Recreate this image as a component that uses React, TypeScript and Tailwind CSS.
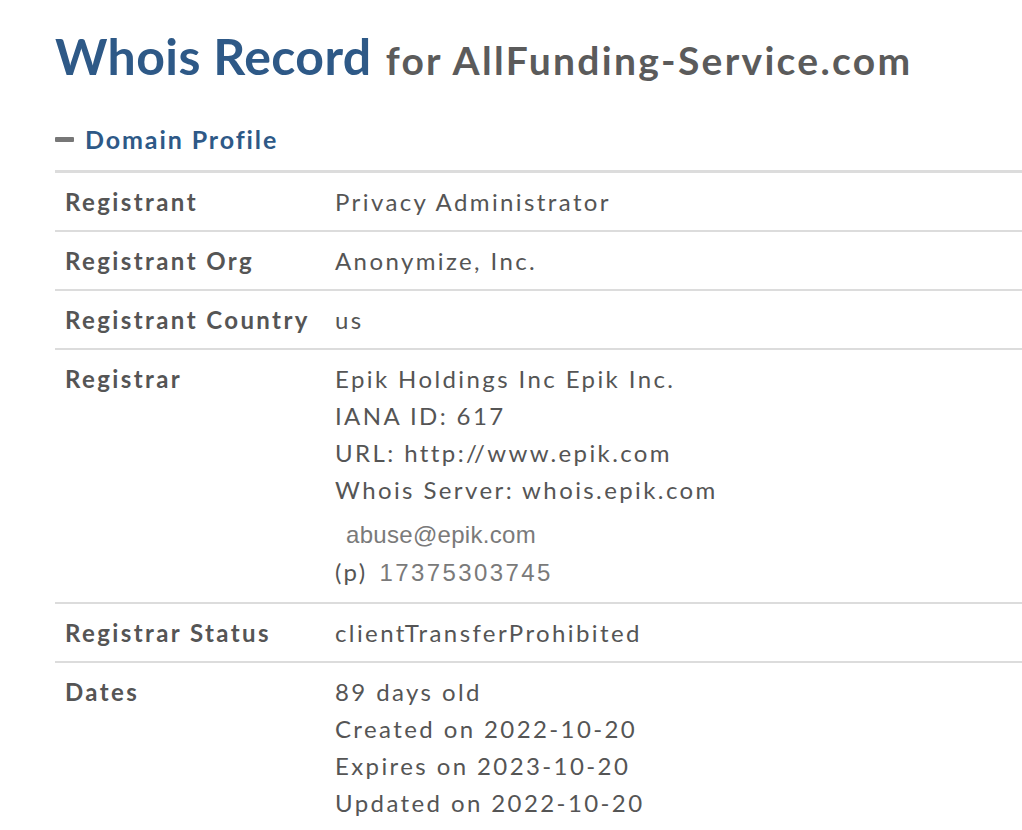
import React from "react";

const rows: { label: string; values: React.ReactNode[] }[] = [
  { label: "Registrant", values: ["Privacy Administrator"] },
  { label: "Registrant Org", values: ["Anonymize, Inc."] },
  { label: "Registrant Country", values: ["us"] },
];

const arial = { fontFamily: "'Liberation Sans', Arial, sans-serif" };

export default function App() {
  return (
    <div className="min-h-[830px] w-[1022px] overflow-hidden bg-white" style={{ fontFamily: "Lato, 'Open Sans', sans-serif" }}>
      <div className="pl-[55px] pt-[26px]">
        <h1 className="flex items-baseline whitespace-nowrap leading-[60px]">
          <span className="text-[50px] font-bold tracking-[0.4px] text-[#2e5987]">Whois Record</span>
          <span className="ml-[14px] text-[39px] font-bold tracking-[2.3px] text-[#5b5b5b]">for AllFunding-Service.com</span>
        </h1>
        <div className="mt-[34px] flex items-center">
          <span className="block h-[5px] w-[19px] rounded-[1px] bg-[#777]" />
          <span className="ml-[11px] text-[25px] font-bold leading-[30px] tracking-[1.9px] text-[#2e5987]">Domain Profile</span>
        </div>
        <div className="mt-[16px] w-[1000px] border-t-[3px] border-[#dcdcdc] text-[24px] text-[#555] tracking-[2.4px]">
          {rows.map((r) => (
            <div key={r.label} className="flex border-b-2 border-[#dcdcdc] py-[10px] leading-[37px]">
              <div className="w-[280px] shrink-0 pl-[10px] font-bold">{r.label}</div>
              <div>{r.values}</div>
            </div>
          ))}
          <div className="flex border-b-2 border-[#dcdcdc] pt-[10px] pb-[11px] leading-[37px]">
            <div className="w-[280px] shrink-0 pl-[10px] font-bold">Registrar</div>
            <div className="flex flex-col">
              <span>Epik Holdings Inc Epik Inc.</span>
              <span>IANA ID: 617</span>
              <span>URL: http://www.epik.com</span>
              <span>Whois Server: whois.epik.com</span>
              <span className="mt-[8px] pl-[11px] text-[24px] leading-[37px] tracking-[0.3px] text-[#7a7a7a]" style={arial}>
                abuse@epik.com
              </span>
              <span className="leading-[37px]">
                (p)
                <span className="ml-[12px] text-[24px] tracking-[2.4px] text-[#7a7a7a]" style={arial}>
                  17375303745
                </span>
              </span>
            </div>
          </div>
          <div className="flex border-b-2 border-[#dcdcdc] py-[10px] leading-[37px]">
            <div className="w-[280px] shrink-0 pl-[10px] font-bold">Registrar Status</div>
            <div>clientTransferProhibited</div>
          </div>
          <div className="flex py-[10px] leading-[37px]">
            <div className="w-[280px] shrink-0 pl-[10px] font-bold">Dates</div>
            <div className="flex flex-col">
              <span>89 days old</span>
              <span>Created on 2022-10-20</span>
              <span>Expires on 2023-10-20</span>
              <span>Updated on 2022-10-20</span>
            </div>
          </div>
        </div>
      </div>
    </div>
  );
}
